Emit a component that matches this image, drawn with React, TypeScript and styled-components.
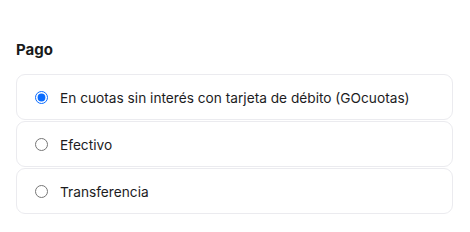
import React, { useState } from "react";
import styled, { createGlobalStyle } from "styled-components";

const GlobalStyle = createGlobalStyle`
  body {
    margin: 0;
    background: #ffffff;
    font-family: Inter, "Noto Sans", sans-serif;
    color: #1c1c1e;
  }
`;

const Section = styled.div`
  padding: 41px 17px 0 16px;
`;

const Title = styled.div`
  font-size: 15px;
  font-weight: 700;
  line-height: 18px;
  margin-bottom: 15px;
  color: #1a1a1a;
`;

const List = styled.div`
  display: flex;
  flex-direction: column;
  gap: 1px;
`;

const Option = styled.label<{ $checked: boolean }>`
  display: flex;
  align-items: center;
  gap: 12px;
  height: 46px;
  box-sizing: border-box;
  padding: 1px 18px 0;
  border: 1px solid #ebebef;
  border-radius: 9px;
  font-size: 13.7px;
  color: #1c1c1e;
  cursor: pointer;
  background: #fff;
`;

const Radio = styled.input`
  margin: 0;
  width: 13px;
  height: 13px;
  accent-color: #0a6cff;
`;

const options = [
  "En cuotas sin interés con tarjeta de débito (GOcuotas)",
  "Efectivo",
  "Transferencia",
];

const App: React.FC = () => {
  const [selected, setSelected] = useState(0);
  return (
    <>
      <GlobalStyle />
      <Section>
        <Title>Pago</Title>
        <List>
          {options.map((o, i) => (
            <Option key={o} $checked={selected === i}>
              <Radio
                type="radio"
                name="pago"
                checked={selected === i}
                onChange={() => setSelected(i)}
              />
              {o}
            </Option>
          ))}
        </List>
      </Section>
    </>
  );
};

export default App;
